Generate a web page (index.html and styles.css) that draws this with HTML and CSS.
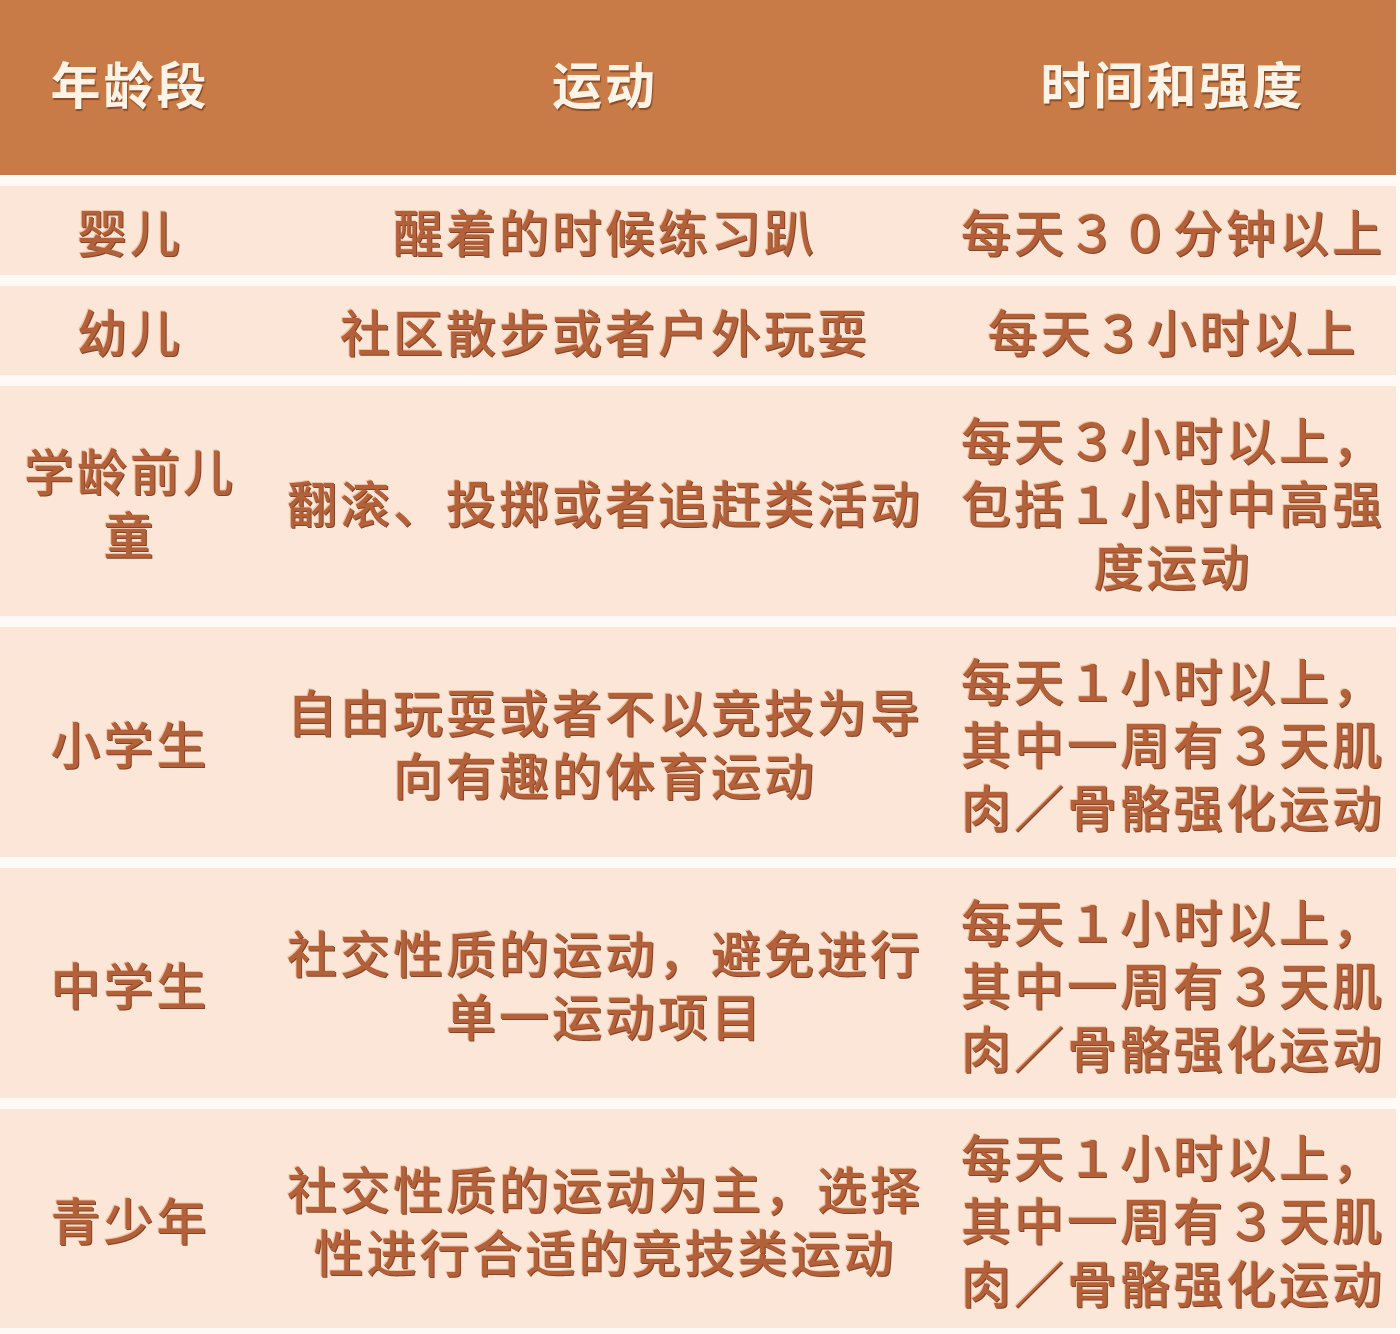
FILE: index.html
```html
<!DOCTYPE html>
<html lang="zh-CN">
<head>
<meta charset="utf-8">
<title>各年龄段运动建议</title>
<link rel="stylesheet" href="styles.css">
</head>
<body>
<div class="table">
  <div class="row head">
    <div class="cell c1">年龄段</div>
    <div class="cell c2">运动</div>
    <div class="cell c3">时间和强度</div>
  </div>
  <div class="row short">
    <div class="cell c1">婴儿</div>
    <div class="cell c2">醒着的时候练习趴</div>
    <div class="cell c3">每天30分钟以上</div>
  </div>
  <div class="row short">
    <div class="cell c1">幼儿</div>
    <div class="cell c2">社区散步或者户外玩耍</div>
    <div class="cell c3">每天3小时以上</div>
  </div>
  <div class="row tall">
    <div class="cell c1"><span class="ln">学龄前儿</span><span class="ln">童</span></div>
    <div class="cell c2">翻滚、投掷或者追赶类活动</div>
    <div class="cell c3"><span class="ln">每天3小时以上，</span><span class="ln">包括1小时中高强</span><span class="ln">度运动</span></div>
  </div>
  <div class="row tall">
    <div class="cell c1">小学生</div>
    <div class="cell c2"><span class="ln">自由玩耍或者不以竞技为导</span><span class="ln">向有趣的体育运动</span></div>
    <div class="cell c3"><span class="ln">每天1小时以上，</span><span class="ln">其中一周有3天肌</span><span class="ln">肉/骨骼强化运动</span></div>
  </div>
  <div class="row tall">
    <div class="cell c1">中学生</div>
    <div class="cell c2"><span class="ln">社交性质的运动，避免进行</span><span class="ln">单一运动项目</span></div>
    <div class="cell c3"><span class="ln">每天1小时以上，</span><span class="ln">其中一周有3天肌</span><span class="ln">肉/骨骼强化运动</span></div>
  </div>
  <div class="row last">
    <div class="cell c1">青少年</div>
    <div class="cell c2"><span class="ln">社交性质的运动为主，选择</span><span class="ln">性进行合适的竞技类运动</span></div>
    <div class="cell c3"><span class="ln">每天1小时以上，</span><span class="ln">其中一周有3天肌</span><span class="ln">肉/骨骼强化运动</span></div>
  </div>
</div>
</body>
</html>
```

FILE: styles.css
```css
html, body {
  margin: 0;
  padding: 0;
  background: #fffaf6;
}

body {
  width: 1400px;
  height: 1334px;
  overflow: hidden;
  font-family: "Noto Sans CJK SC", "Noto Sans", sans-serif;
}

.table {
  width: 1396px;
  display: flex;
  flex-direction: column;
  gap: 11px;
}

.row {
  display: grid;
  grid-template-columns: 260px 690px 1fr;
  background: #fce6d8;
}

.row.head {
  height: 175px;
  background: #c87a47;
}

.row.short { height: 89px; }
.row.tall { height: 230px; }
.row.last { height: 219px; }

.cell {
  display: flex;
  flex-direction: column;
  align-items: center;
  justify-content: center;
  text-align: center;
  font-size: 50px;
  line-height: 63px;
  font-weight: 500;
  letter-spacing: 3px;
  color: #b2613a;
  text-shadow: 1px 1px 0 #874326, -1px -1px 0 #efc3a3;
  font-variant-east-asian: full-width;
  white-space: nowrap;
}

.ln {
  display: block;
  height: 63px;
}

.head .cell {
  font-weight: 700;
  color: #fdf3e6;
  text-shadow: 1px 2px 1px #8b4a25;
  padding-bottom: 10px;
}
```
